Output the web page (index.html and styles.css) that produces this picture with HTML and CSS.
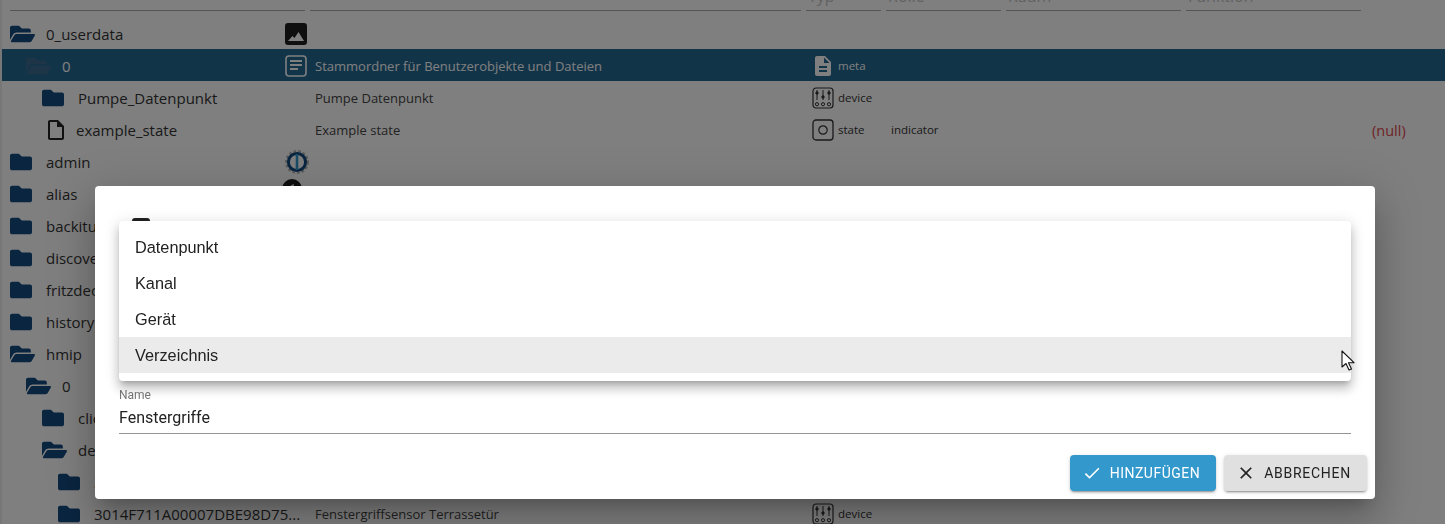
FILE: index.html
```html
<!DOCTYPE html>
<html lang="de">
<head>
<meta charset="utf-8">
<title>Objekte</title>
<link rel="stylesheet" href="styles.css">
</head>
<body>
<svg class="defs" width="0" height="0" aria-hidden="true">
  <symbol id="folder" viewBox="0 0 512 512"><path d="M464 128H272l-64-64H48C21.49 64 0 85.49 0 112v288c0 26.51 21.49 48 48 48h416c26.51 0 48-21.49 48-48V176c0-26.51-21.49-48-48-48z"/></symbol>
  <symbol id="folder-open" viewBox="0 0 576 512"><path d="M572.694 292.093L500.27 416.248A63.997 63.997 0 0 1 444.989 448H45.025c-18.523 0-30.064-20.093-20.731-36.093l72.424-124.155A64 64 0 0 1 152 256h399.964c18.523 0 30.064 20.093 20.73 36.093zM152 224h328v-48c0-26.51-21.49-48-48-48H272l-64-64H48C21.49 64 0 85.49 0 112v278.046l69.077-118.418C86.214 242.25 117.989 224 152 224z"/></symbol>
  <symbol id="device" viewBox="0 0 22 22">
    <rect x="1" y="1" width="20" height="20" rx="3" fill="none" stroke="currentColor" stroke-width="1.200"/>
    <g fill="none" stroke="currentColor" stroke-width="1">
      <path d="M5 3v10M11 3v10M17 3v10"/>
      <circle cx="5" cy="6" r="1.200" fill="currentColor"/>
      <circle cx="11" cy="10" r="1.200" fill="currentColor"/>
      <circle cx="17" cy="6" r="1.200" fill="currentColor"/>
      <circle cx="5" cy="17.200" r="1.600"/>
      <circle cx="11" cy="17.200" r="1.600"/>
      <circle cx="17" cy="17.200" r="1.600"/>
    </g>
  </symbol>
  <symbol id="state" viewBox="0 0 22 22">
    <rect x="1" y="1" width="20" height="20" rx="3" fill="none" stroke="currentColor" stroke-width="1.300"/>
    <circle cx="11" cy="11" r="4.200" fill="none" stroke="currentColor" stroke-width="1.200"/>
  </symbol>
</svg>

<div class="tree">
  <div class="head">
    <div class="head-cell"></div>
    <div class="head-cell"></div>
    <div class="head-cell"><span>Typ</span></div>
    <div class="head-cell"><span>Rolle</span></div>
    <div class="head-cell"><span>Raum</span></div>
    <div class="head-cell"><span>Funktion</span></div>
  </div>

  <div class="row">
    <div class="name d0"><svg class="ico-open"><use href="#folder-open"/></svg><span>0_userdata</span></div>
    <div class="obj">
      <svg class="obj-icon" viewBox="0 0 22 22"><rect width="22" height="22" rx="3" fill="#1f1f1f"/><path d="M3 18l4.500-5 2 2 4-6 5.500 9z" fill="#fff"/></svg>
    </div>
  </div>

  <div class="row selected">
    <div class="name d1"><svg class="ico-open dim"><use href="#folder-open"/></svg><span>0</span></div>
    <div class="obj">
      <svg class="obj-icon" viewBox="0 0 22 22"><rect x="1" y="1" width="20" height="20" rx="3" fill="none" stroke="currentColor" stroke-width="1.600"/><path d="M5 6h12M5 10h12M5 14h8" stroke="currentColor" stroke-width="1.800"/></svg>
    </div>
    <div class="desc">Stammordner für Benutzerobjekte und Dateien</div>
    <div class="type"><svg class="type-icon" viewBox="1 1 22 22"><path fill="currentColor" d="M14 2H6c-1.100 0-1.990.9-1.990 2L4 20c0 1.100.89 2 1.990 2H18c1.100 0 2-.9 2-2V8l-6-6zm2 16H8v-2h8v2zm0-4H8v-2h8v2zm-3-5V3.500L18.500 9H13z"/></svg><span>meta</span></div>
  </div>

  <div class="row">
    <div class="name d2"><svg class="ico-closed"><use href="#folder"/></svg><span>Pumpe_Datenpunkt</span></div>
    <div class="obj"></div>
    <div class="desc">Pumpe Datenpunkt</div>
    <div class="type"><svg class="type-icon"><use href="#device"/></svg><span>device</span></div>
  </div>

  <div class="row">
    <div class="name d2"><svg class="ico-file" viewBox="0 0 24 24"><path d="M14 2H6c-1.100 0-1.990.9-1.990 2L4 20c0 1.100.89 2 1.990 2H18c1.100 0 2-.9 2-2V8l-6-6zM6 20V4h7v5h5v11H6z"/></svg><span>example_state</span></div>
    <div class="obj"></div>
    <div class="desc">Example state</div>
    <div class="type"><svg class="type-icon"><use href="#state"/></svg><span>state</span></div>
    <div class="role">indicator</div>
    <div class="value">(null)</div>
  </div>

  <div class="row">
    <div class="name d0"><svg class="ico-closed"><use href="#folder"/></svg><span>admin</span></div>
    <div class="obj">
      <svg class="obj-icon logo" viewBox="0 0 24 24">
        <circle cx="12" cy="12" r="10.800" fill="none" stroke="#b8b8b8" stroke-width="2.400" stroke-dasharray="2.800 1.900"/>
        <circle cx="12" cy="12" r="8.600" fill="none" stroke="#144a80" stroke-width="3"/>
        <rect x="10.700" y="4" width="2.600" height="16" fill="#3399cc"/>
      </svg>
    </div>
  </div>

  <div class="row">
    <div class="name d0"><svg class="ico-closed"><use href="#folder"/></svg><span>alias</span></div>
    <div class="obj">
      <svg class="obj-icon" viewBox="0 0 22 22"><circle cx="7" cy="6" r="10" fill="#1f1f1f"/><path d="M6 5c0-2 1-3 3-3" stroke="#ddd" stroke-width="1.500" fill="none"/></svg>
    </div>
  </div>

  <div class="row"><div class="name d0"><svg class="ico-closed"><use href="#folder"/></svg><span>backitup</span></div></div>
  <div class="row"><div class="name d0"><svg class="ico-closed"><use href="#folder"/></svg><span>discovery</span></div></div>
  <div class="row"><div class="name d0"><svg class="ico-closed"><use href="#folder"/></svg><span>fritzdect</span></div></div>
  <div class="row"><div class="name d0"><svg class="ico-closed"><use href="#folder"/></svg><span>history</span></div></div>
  <div class="row"><div class="name d0"><svg class="ico-open"><use href="#folder-open"/></svg><span>hmip</span></div></div>
  <div class="row"><div class="name d1"><svg class="ico-open"><use href="#folder-open"/></svg><span>0</span></div></div>
  <div class="row"><div class="name d2"><svg class="ico-closed"><use href="#folder"/></svg><span>clients</span></div></div>
  <div class="row"><div class="name d2"><svg class="ico-open"><use href="#folder-open"/></svg><span>devices</span></div></div>
  <div class="row"><div class="name d3"><svg class="ico-closed"><use href="#folder"/></svg><span>3014F711A00007DBE98D7...</span></div></div>
  <div class="row">
    <div class="name d3"><svg class="ico-closed"><use href="#folder"/></svg><span>3014F711A00007DBE98D75...</span></div>
    <div class="obj"></div>
    <div class="desc">Fenstergriffsensor Terrassetür</div>
    <div class="type"><svg class="type-icon"><use href="#device"/></svg><span>device</span></div>
  </div>
</div>

<div class="backdrop"></div>

<div class="dialog">
  <div class="type-select"><span class="select-icon"></span></div>
  <label class="field-label">Name</label>
  <div class="field-input">Fenstergriffe</div>
  <div class="actions">
    <button class="btn primary"><svg viewBox="0 0 24 24"><path fill="currentColor" d="M9 16.170L4.830 12l-1.420 1.410L9 19 21 7l-1.410-1.410z"/></svg>Hinzufügen</button>
    <button class="btn cancel"><svg viewBox="0 0 24 24"><path fill="currentColor" d="M19 6.410L17.590 5 12 10.590 6.410 5 5 6.410 10.590 12 5 17.590 6.410 19 12 13.410 17.590 19 19 17.590 13.410 12z"/></svg>Abbrechen</button>
  </div>
  <ul class="menu">
    <li>Datenpunkt</li>
    <li>Kanal</li>
    <li>Gerät</li>
    <li class="hover">Verzeichnis</li>
  </ul>
  <svg class="cursor" viewBox="0 0 14 21"><path d="M1 1v16l4-3.500 3 6.500 2.500-1-3-6.300H13z" fill="#fff" stroke="#111" stroke-width="1.100" stroke-linejoin="round"/></svg>
</div>
</body>
</html>
```

FILE: styles.css
```css
* { box-sizing: border-box; }

html, body {
  margin: 0;
  height: 100%;
  overflow: hidden;
  background: #fff;
}

.defs { position: absolute; }

.tree {
  height: 524px;
  overflow: hidden;
  border-left: 2px solid #eee;
  font-family: "Open Sans", "Noto Sans", sans-serif;
  color: #333;
}

.head {
  display: grid;
  grid-template-columns: 295px 491px 75px 115px 175px 175px;
  column-gap: 5px;
  height: 17px;
  padding-left: 8px;
}

.head-cell {
  height: 11px;
  border-bottom: 1px solid #aaa;
  display: flex;
  align-items: flex-end;
  overflow: hidden;
  padding: 0 0 6px 2px;
  font-size: 16px;
  line-height: 16px;
  color: #c4c4c4;
}

.row {
  display: grid;
  grid-template-columns: 283px 30px 497px 79px 481px auto;
  height: 32px;
  padding-top: 2px;
  align-items: center;
}

.row.selected {
  background: #246892;
  color: #fff;
}

.name {
  display: flex;
  align-items: center;
  font-size: 15px;
  white-space: nowrap;
  height: 30px;
}

.d0 { padding-left: 8px; }
.d1 { padding-left: 24px; }
.d2 { padding-left: 40px; }
.d3 { padding-left: 56px; }

.ico-open, .ico-closed {
  flex: none;
  fill: #144a80;
  height: 28px;
}

.ico-open { width: 25px; margin-right: 11px; }
.ico-closed { width: 22px; margin-right: 14px; }
.ico-open.dim { fill: #3a6a8c; }

.ico-file {
  flex: none;
  width: 24px;
  height: 24px;
  margin: 0 8px 0 2px;
  fill: #222;
}

.obj { height: 30px; display: flex; align-items: center; }
.obj-icon { width: 22px; height: 22px; overflow: visible; display: block; }
.obj-icon.logo { width: 24px; height: 24px; }

.desc {
  font-size: 13px;
  white-space: nowrap;
  color: #444;
}

.selected .desc { color: #fff; }

.type {
  display: flex;
  align-items: center;
  gap: 4px;
  font-size: 11.500px;
}

.type span { margin-top: -2px; }

.type-icon { width: 22px; height: 22px; flex: none; display: block; }

.role { font-size: 11.500px; margin-top: -1px; }

.value {
  font-size: 14.500px;
  color: #e0454f;
}

.backdrop {
  position: fixed;
  inset: 0;
  background: rgba(0, 0, 0, .5);
}

.dialog {
  position: absolute;
  left: 95px;
  top: 186px;
  width: 1280px;
  height: 313px;
  padding: 32px 24px 8px;
  background: #fff;
  border-radius: 4px;
  box-shadow: 0 11px 15px -7px rgba(0,0,0,.2), 0 24px 38px 3px rgba(0,0,0,.14), 0 9px 46px 8px rgba(0,0,0,.12);
  font-family: Roboto, "Liberation Sans", sans-serif;
  color: #222;
}

.type-select { height: 170px; padding-left: 13px; }

.select-icon {
  display: block;
  width: 18px;
  height: 18px;
  background: #222;
  border-radius: 3px;
}

.field-label {
  display: block;
  font-size: 12px;
  line-height: 14px;
  color: #777;
}

.field-input {
  height: 32px;
  padding-top: 5px;
  font-size: 16px;
  line-height: 22px;
  border-bottom: 1px solid #949494;
}

.actions {
  display: flex;
  justify-content: flex-end;
  gap: 8px;
  margin: 21px -16px 0 0;
}

.btn {
  display: flex;
  align-items: center;
  height: 36px;
  padding: 0 16px 0 12px;
  border: 0;
  border-radius: 4px;
  background: #e0e0e0;
  color: #222;
  font: 400 14px Roboto, sans-serif;
  letter-spacing: .5px;
  text-transform: uppercase;
  box-shadow: 0 3px 1px -2px rgba(0,0,0,.2), 0 2px 2px 0 rgba(0,0,0,.14), 0 1px 5px 0 rgba(0,0,0,.12);
}

.btn svg { width: 20px; height: 20px; margin-right: 8px; }
.btn.primary { background: #3399cc; color: #fff; }
.btn.cancel { letter-spacing: .73px; }

.menu {
  position: absolute;
  left: 24px;
  top: 35px;
  width: 1232px;
  margin: 0;
  padding: 8px 0;
  list-style: none;
  background: #fff;
  border-radius: 4px;
  box-shadow: 0 5px 5px -3px rgba(0,0,0,.2), 0 8px 10px 1px rgba(0,0,0,.14), 0 3px 14px 2px rgba(0,0,0,.12);
  font-family: "Liberation Sans", Arial, sans-serif;
  font-size: 16.300px;
  color: #222;
}

.menu li {
  height: 36px;
  line-height: 36px;
  padding-left: 16px;
}

.menu li.hover { background: #ebebeb; }

.cursor {
  position: absolute;
  left: 1246px;
  top: 164px;
  width: 14px;
  height: 21px;
}
```
